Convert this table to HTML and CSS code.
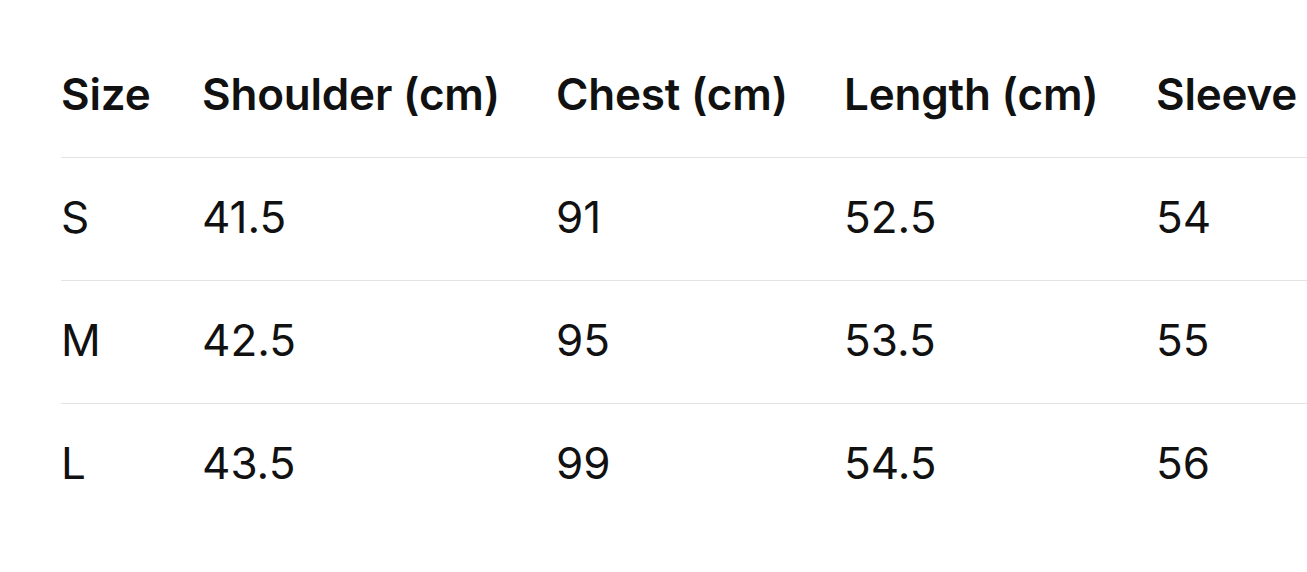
FILE: index.html
```html
<!DOCTYPE html>
<html lang="en">
<head>
<meta charset="utf-8">
<title>Size chart</title>
<link rel="stylesheet" href="styles.css">
</head>
<body>
<div class="wrap">
<table class="size-table">
  <colgroup>
    <col class="c-size">
    <col class="c-shoulder">
    <col class="c-chest">
    <col class="c-length">
    <col class="c-sleeve">
  </colgroup>
  <thead>
    <tr><th>Size</th><th>Shoulder (cm)</th><th>Chest (cm)</th><th>Length (cm)</th><th>Sleeve (cm)</th></tr>
  </thead>
  <tbody>
    <tr><td>S</td><td>41.5</td><td>91</td><td>52.5</td><td>54</td></tr>
    <tr><td>M</td><td>42.5</td><td>95</td><td>53.5</td><td>55</td></tr>
    <tr><td>L</td><td>43.5</td><td>99</td><td>54.5</td><td>56</td></tr>
  </tbody>
</table>
</div>
</body>
</html>
```
FILE: styles.css
```css
html, body {
  margin: 0;
  background: #ffffff;
}
body {
  font-family: Inter, "Noto Sans", "Liberation Sans", sans-serif;
  color: #111111;
  overflow: hidden;
}
.wrap {
  padding: 35px 0 0 61px;
  overflow: hidden;
}
.size-table {
  border-collapse: collapse;
  table-layout: fixed;
  width: 1402px;
  font-size: 44px;
  white-space: nowrap;
}
.c-size { width: 141px; }
.c-shoulder { width: 354px; }
.c-chest { width: 288px; }
.c-length { width: 312px; }
.c-sleeve { width: 307px; }
.size-table th,
.size-table td {
  height: 118px;
  padding: 0 0 4px 0;
  text-align: left;
  vertical-align: middle;
}
.size-table th {
  font-weight: 600;
  letter-spacing: -0.2px;
}
.size-table td {
  font-weight: 400;
}
.size-table tr {
  border-bottom: 1px solid #e3e3e3;
}
.size-table tbody tr:last-child {
  border-bottom: none;
}
```
